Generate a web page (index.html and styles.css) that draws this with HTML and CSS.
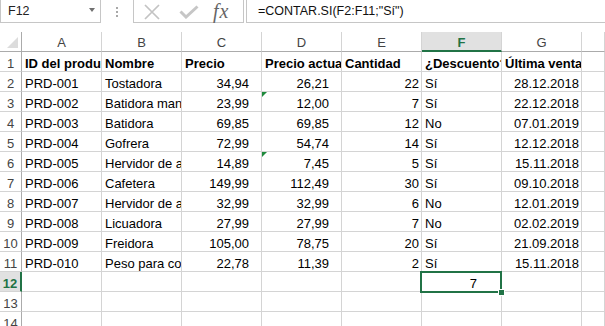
FILE: index.html
```html
<!DOCTYPE html>
<html lang="es">
<head>
  <meta charset="UTF-8" />
  <title>Hoja de cálculo</title>
  <link rel="stylesheet" href="styles.css">
</head>
<body>
  <div class="bar">
    <div class="namebox">F12<span class="drop"></span></div>
    <div class="grip"><span></span><span></span><span></span></div>
    <div class="btns">
      <svg class="ico-x" width="16" height="16" viewBox="0 0 16 16"><path d="M1 1L15 15M15 1L1 15" stroke="#c3c3c3" stroke-width="1.7" fill="none"/></svg>
      <svg class="ico-ok" width="20" height="14" viewBox="0 0 20 14"><path d="M1.5 6.5L7 12L18.5 1.5" stroke="#c6c6c6" stroke-width="3" fill="none"/></svg>
      <span class="fx">fx</span>
    </div>
    <div class="formula">=CONTAR.SI(F2:F11;"Sí")</div>
  </div>

  <div class="sheet">
    <div class="corner"></div><div class="hd">A</div><div class="hd">B</div><div class="hd">C</div><div class="hd">D</div><div class="hd">E</div><div class="hd on">F</div><div class="hd">G</div><div class="hd"></div>

    <div class="rh">1</div><div class="c b">ID del producto</div><div class="c b">Nombre</div><div class="c b">Precio</div><div class="c b">Precio actual</div><div class="c b">Cantidad</div><div class="c b">¿Descuento?</div><div class="c b">Última venta</div><div class="c"></div>
    <div class="rh">2</div><div class="c">PRD-001</div><div class="c">Tostadora</div><div class="c n p">34,94</div><div class="c n p">26,21</div><div class="c n">22</div><div class="c">Sí</div><div class="c n">28.12.2018</div><div class="c"></div>
    <div class="rh">3</div><div class="c">PRD-002</div><div class="c">Batidora manual</div><div class="c n p">23,99</div><div class="c n p tri">12,00</div><div class="c n">7</div><div class="c">Sí</div><div class="c n">22.12.2018</div><div class="c"></div>
    <div class="rh">4</div><div class="c">PRD-003</div><div class="c">Batidora</div><div class="c n p">69,85</div><div class="c n p">69,85</div><div class="c n">12</div><div class="c">No</div><div class="c n">07.01.2019</div><div class="c"></div>
    <div class="rh">5</div><div class="c">PRD-004</div><div class="c">Gofrera</div><div class="c n p">72,99</div><div class="c n p">54,74</div><div class="c n">14</div><div class="c">Sí</div><div class="c n">12.12.2018</div><div class="c"></div>
    <div class="rh">6</div><div class="c">PRD-005</div><div class="c">Hervidor de agua</div><div class="c n p">14,89</div><div class="c n p tri">7,45</div><div class="c n">5</div><div class="c">Sí</div><div class="c n">15.11.2018</div><div class="c"></div>
    <div class="rh">7</div><div class="c">PRD-006</div><div class="c">Cafetera</div><div class="c n p">149,99</div><div class="c n p">112,49</div><div class="c n">30</div><div class="c">Sí</div><div class="c n">09.10.2018</div><div class="c"></div>
    <div class="rh">8</div><div class="c">PRD-007</div><div class="c">Hervidor de agua</div><div class="c n p">32,99</div><div class="c n p">32,99</div><div class="c n">6</div><div class="c">No</div><div class="c n">12.01.2019</div><div class="c"></div>
    <div class="rh">9</div><div class="c">PRD-008</div><div class="c">Licuadora</div><div class="c n p">27,99</div><div class="c n p">27,99</div><div class="c n">7</div><div class="c">No</div><div class="c n">02.02.2019</div><div class="c"></div>
    <div class="rh">10</div><div class="c">PRD-009</div><div class="c">Freidora</div><div class="c n p">105,00</div><div class="c n p">78,75</div><div class="c n">20</div><div class="c">Sí</div><div class="c n">21.09.2018</div><div class="c"></div>
    <div class="rh">11</div><div class="c">PRD-010</div><div class="c">Peso para cocina</div><div class="c n p">22,78</div><div class="c n p">11,39</div><div class="c n">2</div><div class="c">Sí</div><div class="c n">15.11.2018</div><div class="c"></div>
    <div class="rh on">12</div><div class="c"></div><div class="c"></div><div class="c"></div><div class="c"></div><div class="c"></div><div class="c n sel">7</div><div class="c"></div><div class="c"></div>
    <div class="rh">13</div><div class="c"></div><div class="c"></div><div class="c"></div><div class="c"></div><div class="c"></div><div class="c"></div><div class="c"></div><div class="c"></div>
    <div class="rh">14</div><div class="c"></div><div class="c"></div><div class="c"></div><div class="c"></div><div class="c"></div><div class="c"></div><div class="c"></div><div class="c"></div>
  </div>
</body>
</html>
```

FILE: styles.css
```css
* { box-sizing: border-box; margin: 0; padding: 0; }
body {
  font-family: "Liberation Sans", Arial, sans-serif;
  background: #fff; color: #000;
  width: 605px; height: 326px; overflow: hidden;
}

/* barra de fórmulas */
.bar {
  display: flex; height: 24px;
  margin-top: -1px; margin-right: -4px;
  font-size: 12.5px; line-height: 22px;
}
.namebox {
  width: 101px; border: 1px solid #c6c6c6;
  padding-left: 7px; color: #222;
  display: flex; align-items: center;
}
.drop {
  margin-left: auto; margin-right: 5px;
  border-left: 3.5px solid transparent; border-right: 3.5px solid transparent;
  border-top: 4px solid #707070;
  margin-top: -2px;
}
.grip {
  width: 32px; display: flex; flex-direction: column;
  align-items: center; justify-content: center; gap: 2px;
  padding-top: 1px;
}
.grip span { width: 2px; height: 2px; background: #a8a8a8; }
.btns {
  width: 111px; border: 1px solid #c6c6c6;
  display: flex; align-items: center;
  padding-left: 10px;
}
.ico-x { margin-top: 1px; }
.ico-ok { margin-left: 19px; margin-top: 1px; }
.fx {
  margin-left: 14px;
  font-family: "Liberation Serif", serif; font-style: italic;
  font-size: 20px; color: #666; letter-spacing: 1px;
}
.formula {
  flex: 1; margin-left: 2px;
  border: 1px solid #c6c6c6;
  padding-left: 11px; color: #111;
}

/* hoja */
.sheet {
  margin-top: 9px;
  display: grid;
  grid-template-columns: 22px repeat(7, 80px) 1fr;
  grid-auto-rows: 20px;
  font-size: 13px; line-height: 15px;
}
.corner {
  position: relative;
  border-right: 1px solid #ababab; border-bottom: 1px solid #ababab;
}
.corner::after {
  content: ""; position: absolute; right: 3px; bottom: 3px;
  border-left: 11px solid transparent; border-bottom: 11px solid #dcdcdc;
}
.hd {
  text-align: center; color: #444; padding-top: 3px;
  border-right: 1px solid #d4d4d4; border-bottom: 1px solid #ababab;
}
.hd.on {
  background: #e1e1e1; color: #217346; font-weight: bold;
  border-bottom: 2px solid #217346;
}
.rh {
  text-align: center; color: #444; padding-top: 4px;
  border-right: 1px solid #ababab; border-bottom: 1px solid #d4d4d4;
}
.rh.on {
  background: #e1e1e1; color: #217346; font-weight: bold;
  border-right: 2px solid #217346;
}
.c {
  padding: 4px 3px 0;
  border-right: 1px solid #d4d4d4; border-bottom: 1px solid #d4d4d4;
  white-space: nowrap; overflow: hidden;
}
.c.b { font-weight: bold; }
.c.n { text-align: right; padding-right: 2px; }
.c.p { padding-right: 12px; }
.tri { position: relative; }
.tri::before {
  content: ""; position: absolute; left: 0; top: 0;
  border-top: 5px solid #1f8a3c; border-right: 5px solid transparent;
}
.c.sel {
  position: relative; overflow: visible;
  padding-right: 24px;
}
.sel::before {
  content: ""; position: absolute;
  left: -2px; top: -1px; right: -1px; bottom: -2px;
  border: 2px solid #217346;
}
.sel::after {
  content: ""; position: absolute;
  right: -4px; bottom: -5px; width: 5px; height: 5px;
  background: #217346; border: 1px solid #fff;
}
```
